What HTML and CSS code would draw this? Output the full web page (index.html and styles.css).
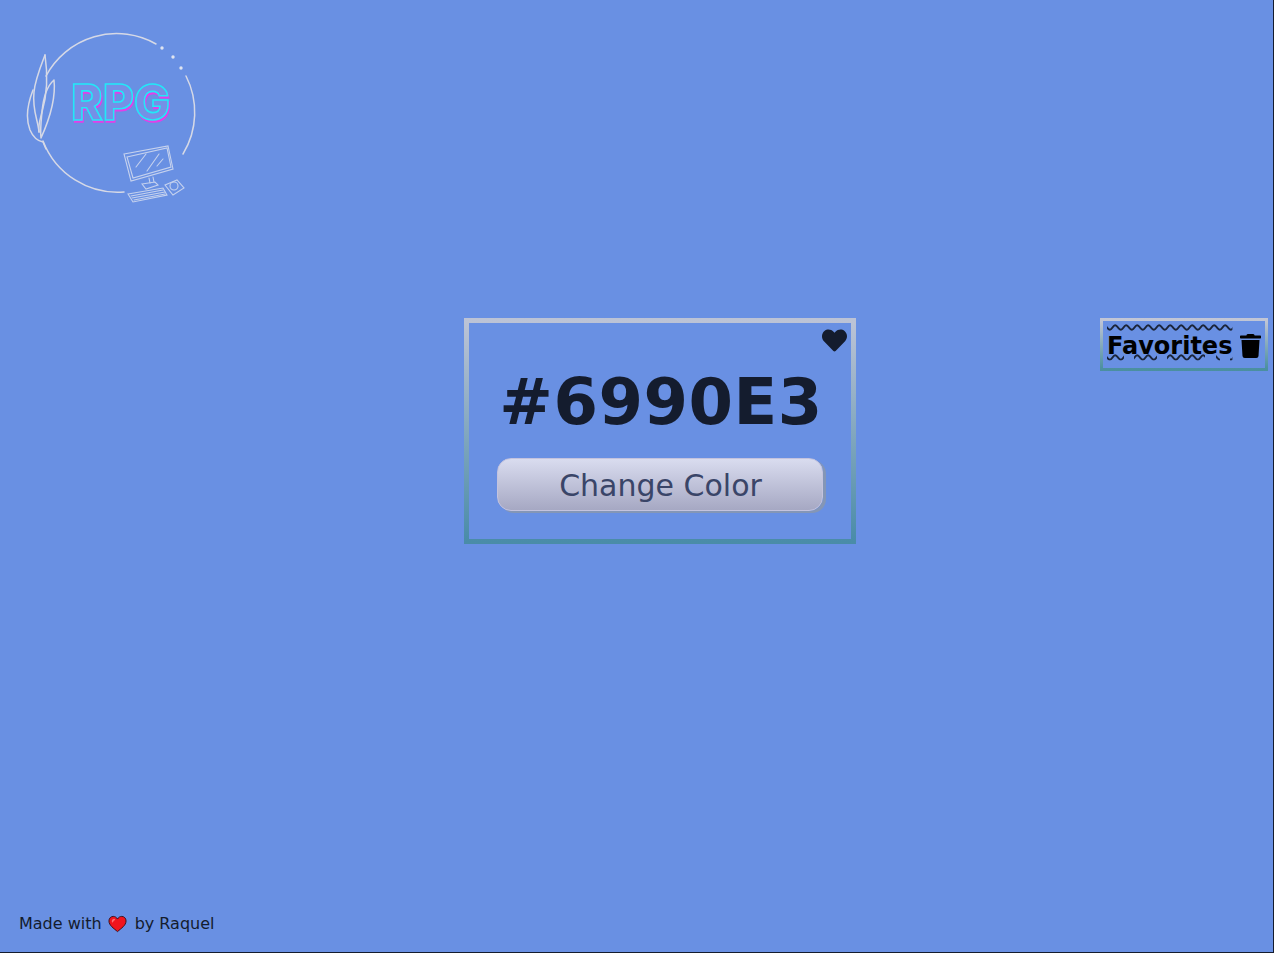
FILE: index.html
```html
<!DOCTYPE html>
<html lang="en">
<head>
    <meta charset="UTF-8">
    <meta name="viewport" content="width=device-width, initial-scale=1.0">
    <title>Random Color Generator</title>
    <link rel="stylesheet" href="styles.css">
</head>
<body>
    <div class="page">
        <header class="header">
            <svg class="logo" width="220" height="220" viewBox="0 0 220 220" role="img" aria-label="RPG logo">
                <g class="logo-line">
                    <path d="M46 76 A80 80 0 0 1 156 44"/>
                    <path d="M186 76 A80 80 0 0 1 183 154"/>
                    <path d="M124 192 A80 80 0 0 1 43 141"/>
                    <path d="M45 55 C40 68 35 80 34 92 C32 110 38 120 39 132"/>
                    <path d="M45 55 C48 75 47 95 42 112 C40 120 38 125 39 132"/>
                    <path d="M54 80 C46 87 43 100 42 112 C41 122 40 130 41 138 M54 80 C56 98 50 118 41 138"/>
                    <path d="M33 90 C26 108 26 120 30 130 C33 137 38 141 43 142 L46 149"/>
                    <circle class="logo-dot" cx="162" cy="48" r="1.7"/>
                    <circle class="logo-dot" cx="173" cy="57" r="1.7"/>
                    <circle class="logo-dot" cx="181" cy="68" r="1.7"/>
                </g>
                <g class="logo-thin">
                    <path d="M124 154 L168 146 L173 169 L131 181 Z"/>
                    <path d="M127 157 L167 148 L171 167 L133 178 Z"/>
                    <path d="M136 167 L146 154 M147 171 L159 154 M157 166 L163 159"/>
                    <path d="M149 178 L150 183 M153 177 L154 182"/>
                    <path d="M142 184 L155 182 L158 185 L146 189 Z"/>
                    <path d="M128 194 L163 188 L167 195 L133 202 Z"/>
                    <path d="M131 196 L163 190 M132 198 L165 192 M134 200 L165 194"/>
                    <path d="M165 185 L177 180 L184 188 L173 195 Z"/>
                    <circle cx="174" cy="186" r="4"/>
                </g>
                <text class="logo-text" x="71" y="120" textLength="99" lengthAdjust="spacingAndGlyphs">RPG</text>
            </svg>
        </header>

        <main class="main">
            <section class="card">
                <svg class="card-heart" viewBox="0 0 512 512" aria-hidden="true">
                    <path d="M462.3 62.6C407.5 15.9 326 24.3 275.7 76.2L256 96.5l-19.7-20.3C186.1 24.3 104.5 15.9 49.7 62.6c-62.8 53.6-66.1 149.8-9.900 207.9l193.500 199.800c12.500 12.900 32.800 12.900 45.300 0l193.500-199.800c56.300-58.100 53-154.300-9.800-207.900z"/>
                </svg>
                <h1 class="hex">#6990E3</h1>
                <button class="change-btn" type="button">Change Color</button>
            </section>

            <aside class="favorites">
                <span class="favorites-title">Favorites</span>
                <svg class="trash" viewBox="0 0 448 512" aria-hidden="true">
                    <path d="M432 32H312l-9.400-18.700A24 24 0 0 0 281.100 0H166.800a23.720 23.720 0 0 0-21.400 13.300L136 32H16A16 16 0 0 0 0 48v32a16 16 0 0 0 16 16h416a16 16 0 0 0 16-16V48a16 16 0 0 0-16-16zM53.200 467a48 48 0 0 0 47.900 45h245.800a48 48 0 0 0 47.900-45L416 128H32z"/>
                </svg>
            </aside>
        </main>

        <footer class="footer">
            <span>Made with</span>
            <svg class="footer-heart" viewBox="0 0 20 18" aria-hidden="true">
                <path class="footer-heart-fill" d="M10 17 C6 13.500 1 10.500 1 5.800 C1 3 3 1 5.500 1 C7.500 1 9 2 10 3.800 C11 2 12.500 1 14.500 1 C17 1 19 3 19 5.800 C19 10.500 14 13.500 10 17 Z"/>
                <path class="footer-heart-shine" d="M4 6 C4 4.500 5 3.500 6.500 3.500 C7.500 3.500 8 4.500 7 5 C6 5.500 5.500 6.500 5 7.500 C4.500 7.500 4 7 4 6 Z"/>
            </svg>
            <span>by Raquel</span>
        </footer>
    </div>
</body>
</html>
```

FILE: styles.css
```css
* {
    box-sizing: border-box;
}
html, body {
    margin: 0;
    height: 100%;
}
body {
    font-family: "DejaVu Sans", Verdana, sans-serif;
    background: #6990E3;
}
.page {
    height: 953px;
    display: flex;
    flex-direction: column;
    border-right: 1px solid #141c2e;
    border-bottom: 1px solid #141c2e;
}
.header {
    height: 318px;
}
.logo {
    display: block;
    filter: blur(0.3px);
}
.logo-line, .logo-thin {
    fill: none;
    stroke: #d6d9e6;
    stroke-width: 1.5;
    stroke-linecap: round;
}
.logo-thin {
    stroke: #c6d2ee;
    stroke-width: 1.1;
}
.logo-dot {
    fill: #e0e4f0;
    stroke: none;
}
.logo-text {
    font-family: Inter, "Liberation Sans", sans-serif;
    font-weight: 800;
    font-size: 49px;
    fill: #7590e6;
    stroke: #22e8f8;
    stroke-width: 1.600;
    filter: drop-shadow(1px 2px 0 #e23fe8);
}
.main {
    flex: 1;
    display: flex;
    align-items: flex-start;
}
.card {
    position: relative;
    width: 392px;
    height: 226px;
    margin-left: 464px;
    padding: 42px 28px 0;
    border: 5px solid;
    border-image: linear-gradient(#bcc3d6, #4a8ca8) 1;
    display: flex;
    flex-direction: column;
    align-items: center;
}
.card-heart {
    position: absolute;
    top: 5px;
    right: 4px;
    width: 25px;
    height: 25px;
    fill: #141c2e;
}
.hex {
    margin: 0 0 0 2px;
    font-size: 64px;
    line-height: 75px;
    font-weight: bold;
    letter-spacing: 0.5px;
    color: #141c2e;
}
.change-btn {
    width: 326px;
    height: 53px;
    margin-top: 18px;
    margin-right: 1px;
    padding: 2px 0 0 2px;
    border: 1px solid #c4c3de;
    border-radius: 14px;
    background: linear-gradient(#d9dcef, #a6a8c3);
    box-shadow: 3px 2px 0 #8496b6;
    font-family: inherit;
    font-size: 30px;
    color: #3a4568;
    cursor: pointer;
}
.favorites {
    width: 168px;
    height: 53px;
    margin-left: auto;
    margin-right: 5px;
    padding: 2px 4px 0 4px;
    border: 3px solid;
    border-image: linear-gradient(#c2c6d6, #4a8fa0) 1;
    display: flex;
    align-items: center;
    justify-content: space-between;
}
.favorites-title {
    font-size: 24px;
    font-weight: bold;
    color: #000;
    text-decoration: overline underline wavy rgba(0, 0, 0, 0.75);
    text-decoration-thickness: 1.500px;
    text-underline-offset: 0;
}
.trash {
    width: 21px;
    height: 24px;
    fill: #000;
}
.footer {
    display: flex;
    align-items: center;
    gap: 7px;
    padding: 0 0 19px 19px;
    font-size: 16px;
    line-height: 19px;
    color: #141c2e;
}
.footer-heart {
    width: 19px;
    height: 18px;
    margin: 0 1px 0 -1px;
}
.footer-heart-fill {
    fill: #f0141e;
    stroke: #3a1018;
    stroke-width: 1;
}
.footer-heart-shine {
    fill: #ff6a70;
}
```
